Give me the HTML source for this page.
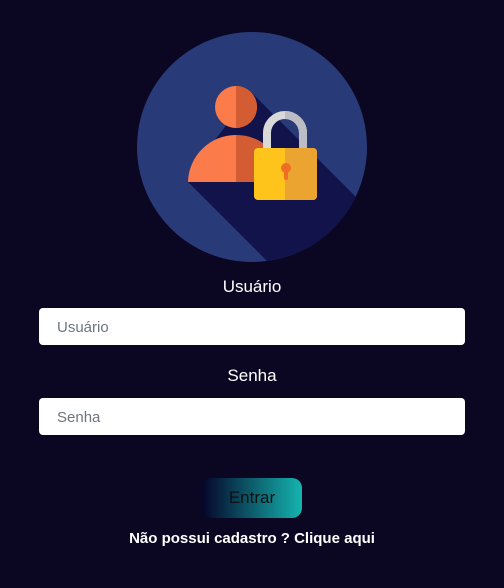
<!DOCTYPE html>
<html><head><meta charset="utf-8"><style>
body{margin:0;width:504px;height:588px;background:#0b0723;font-family:"Liberation Sans",sans-serif;position:relative;overflow:hidden}
.l{position:absolute;left:0;width:504px;text-align:center;color:#fff;font-size:17px}
.i{position:absolute;left:39px;width:426px;height:37px;background:#fff;border-radius:4px;color:#6c757d;font-size:15px;line-height:40px;box-sizing:border-box;padding-left:18px}
.b{position:absolute;left:202px;top:478px;width:100px;height:40px;border-radius:10px;background:linear-gradient(90deg,#05052a,#15b4ae);color:#111;font-size:17px;line-height:40px;text-align:center}
</style></head><body>
<svg width="504" height="300" style="position:absolute;left:0;top:0">
<defs><clipPath id="c"><circle cx="252" cy="147" r="115"/></clipPath></defs>
<circle cx="252" cy="147" r="115" fill="#283b78"/>
<polygon clip-path="url(#c)" points="251,92 400,241 320,314 188,182 215,140" fill="#12134a"/>
<circle cx="236" cy="107" r="21" fill="#fb7b4a"/>
<path d="M236 86a21 21 0 0 1 0 42z" fill="#d35c33"/>
<path d="M188 182a48 48 0 0 1 48-47v47z" fill="#fb7b4a"/>
<path d="M236 135a48 48 0 0 1 32 12v35h-32z" fill="#d35c33"/>
<path d="M267 150v-17a18 18 0 0 1 36 0v17" fill="none" stroke="#d9d9d9" stroke-width="8"/>
<path d="M285 115a18 18 0 0 1 18 18v17" fill="none" stroke="#bdbdc5" stroke-width="8"/>
<rect x="254" y="148" width="63" height="52" rx="4" fill="#fec41b"/>
<path d="M285 148h28a4 4 0 0 1 4 4v44a4 4 0 0 1-4 4h-28z" fill="#eaa42f"/>
<circle cx="286" cy="168" r="5" fill="#ef6d25"/>
<rect x="284" y="168" width="4" height="12" rx="2" fill="#ef6d25"/>
</svg>
<div class="l" style="top:277px">Usuário</div>
<div class="i" style="top:308px">Usuário</div>
<div class="l" style="top:366px">Senha</div>
<div class="i" style="top:398px">Senha</div>
<div class="b">Entrar</div>
<div class="l" style="top:530px;font-size:15px;font-weight:bold">Não possui cadastro ? Clique aqui</div>
</body></html>
